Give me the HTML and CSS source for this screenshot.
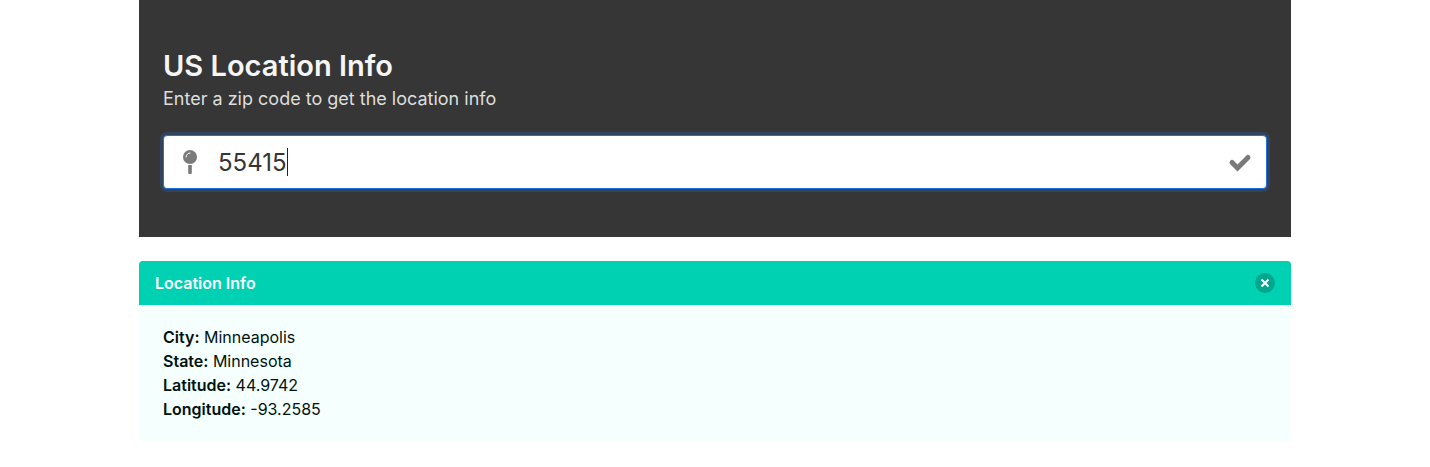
FILE: index.html
```html
<!DOCTYPE html>
<html lang="en">
<head>
<meta charset="utf-8">
<meta name="viewport" content="width=device-width, initial-scale=1">
<title>US Location Info</title>
<link rel="stylesheet" href="styles.css">
</head>
<body>
<main class="container">
  <section class="hero">
    <h1 class="title">US Location Info</h1>
    <label class="subtitle" for="zip">Enter a zip code to get the location info</label>
    <div class="control">
      <input class="input" id="zip" type="text" value="55415" autocomplete="off">
      <svg class="icon icon-left" viewBox="0 0 24 24" aria-hidden="true">
        <circle cx="12" cy="7" r="7" fill="currentColor"/>
        <path d="M10.2 14.9q1.8.4 3.6 0V23q0 1-1 1h-1.600q-1 0-1-1z" fill="currentColor"/>
        <path d="M8 7a4 4 0 0 1 4-4" fill="none" stroke="#fff" stroke-width="1" stroke-linecap="round"/>
      </svg>
      <span class="caret"></span>
      <svg class="icon icon-right" viewBox="0 0 24 24" aria-hidden="true">
        <path d="M4 12.500l5.500 5.500L20 7.500" fill="none" stroke="currentColor" stroke-width="5" stroke-linecap="round" stroke-linejoin="miter"/>
      </svg>
    </div>
  </section>
  <article class="message">
    <header class="message-header">
      <p>Location Info</p>
      <button class="delete" type="button" aria-label="Close">
        <svg class="delete-icon" viewBox="0 0 20 20" aria-hidden="true"><path d="M6.500 6.500l7 7M13.500 6.500l-7 7"/></svg>
      </button>
    </header>
    <ul class="message-body">
      <li><strong>City:</strong> Minneapolis</li>
      <li><strong>State:</strong> Minnesota</li>
      <li><strong>Latitude:</strong> 44.9742</li>
      <li><strong>Longitude:</strong> -93.2585</li>
    </ul>
  </article>
</main>
</body>
</html>
```
FILE: styles.css
```css
* {
  box-sizing: border-box;
  margin: 0;
  padding: 0;
}

body {
  background: #fff;
  color: #00120f;
  font-family: Inter, "Liberation Sans", sans-serif;
  font-size: 16px;
  line-height: 24px;
}

.container {
  width: 100%;
  max-width: 1152px;
  margin: 0 auto;
}

.hero {
  padding: 48px 24px;
  background: #363636;
}

.title {
  margin-bottom: 3px;
  color: #f5f5f5;
  font-size: 29px;
  font-weight: 600;
  line-height: 35px;
}

.subtitle {
  display: block;
  margin-bottom: 24px;
  color: #dedede;
  font-size: 18px;
  line-height: 25px;
}

.control {
  position: relative;
}

.input {
  display: block;
  width: 100%;
  height: 54px;
  padding: 0 54px;
  border: 1px solid #216fdb;
  border-radius: 4px;
  outline: none;
  box-shadow: 0 0 0 3px rgba(33, 111, 219, 0.25);
  background: #fff;
  color: #363636;
  caret-color: transparent;
  font-family: inherit;
  font-size: 24px;
}

.icon {
  position: absolute;
  top: 15px;
  color: #7a7a7a;
  pointer-events: none;
}

.icon-left {
  left: 15px;
  width: 24px;
  height: 24px;
}

.icon-right {
  right: 15px;
  width: 24px;
  height: 24px;
}

.caret {
  position: absolute;
  top: 13px;
  left: 124px;
  width: 1px;
  height: 28px;
  background: #222;
}

.message {
  margin-top: 24px;
  border-radius: 4px;
  background: #f5fffd;
  overflow: hidden;
}

.message-header {
  display: flex;
  align-items: center;
  justify-content: space-between;
  padding: 10px 16px;
  background: #00d1b2;
  color: #fff;
  font-weight: 600;
}

.delete {
  width: 20px;
  height: 20px;
  border: 0;
  border-radius: 50%;
  background: #00a78e;
  cursor: pointer;
}

.delete-icon {
  display: block;
  fill: none;
  stroke: #fff;
  stroke-width: 2;
}

.message-body {
  padding: 20px 24px;
  list-style: none;
}

.message-body strong {
  font-weight: 600;
}
```
